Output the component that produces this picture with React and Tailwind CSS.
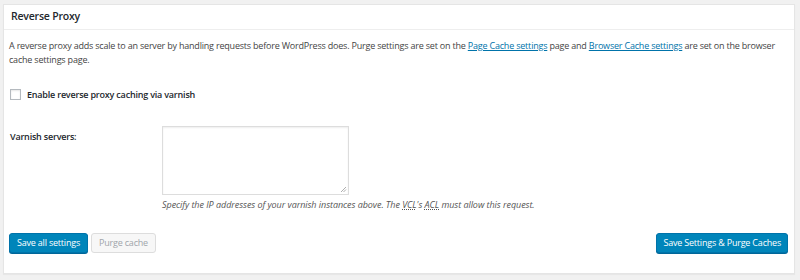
import React from 'react'

const font = { fontFamily: '"Open Sans", "Noto Sans", "Liberation Sans", sans-serif' }

export default function App() {
  return (
    <div className="w-[800px] h-[280px] bg-[#f1f1f1] pt-[4px] pl-[3px] pr-[5px]" style={font}>
      <div className="h-[270px] bg-white border border-[#e5e5e5] shadow-[0_1px_1px_rgba(0,0,0,0.04)] text-[#444] tracking-[-0.2px]">
        {/* Header */}
        <div className="h-[25px] border-b border-[#eee] pl-[7px] flex items-center">
          <h2 className="text-[10.5px] font-semibold text-[#23282d]">Reverse Proxy</h2>
        </div>

        <div className="pl-[5px] pr-[10px]">
          <p className="mt-[9px] text-[9px] leading-[14px] whitespace-nowrap">
            A reverse proxy adds scale to an server by handling requests before WordPress does. Purge settings are set on the{' '}
            <a className="text-[#0073aa] underline">Page Cache settings</a> page and{' '}
            <a className="text-[#0073aa] underline">Browser Cache settings</a> are set on the browser
            <br />
            cache settings page.
          </p>

          {/* Checkbox */}
          <label className="mt-[21px] ml-[1px] flex items-center gap-[6px]">
            <span className="w-[11px] h-[11px] border border-[#b4b9be] bg-white shadow-[inset_0_1px_2px_rgba(0,0,0,0.1)]" />
            <span className="text-[9px] font-semibold text-[#23282d]">Enable reverse proxy caching via varnish</span>
          </label>

          {/* Varnish servers */}
          <div className="mt-[24px] flex">
            <div className="w-[153px] pl-[1px] pt-[4px] text-[9px] font-semibold text-[#23282d]">Varnish servers:</div>
            <div>
              <div className="relative w-[187px] h-[69px] border border-[#ddd] bg-white shadow-[inset_0_1px_2px_rgba(0,0,0,0.07)]">
                <svg className="absolute right-[1px] bottom-[1px]" width="7" height="7" viewBox="0 0 7 7">
                  <path d="M6 1 L1 6 M6 3.5 L3.5 6" stroke="#999" strokeWidth="0.8" />
                </svg>
              </div>
              <p className="mt-[3px] text-[9px] italic text-[#555] tracking-[-0.05px]">
                Specify the IP addresses of your varnish instances above. The{' '}
                <abbr className="underline decoration-dotted">VCL</abbr>'s{' '}
                <abbr className="underline decoration-dotted">ACL</abbr> must allow this request.
              </p>
            </div>
          </div>

          {/* Buttons */}
          <div className="mt-[22px] flex items-center">
            <button className="h-[20px] px-[7px] rounded-[3px] bg-[#0085ba] border border-[#0073aa] text-white text-[9px] shadow-[0_1px_0_#006799]">
              Save all settings
            </button>
            <button className="ml-[3px] h-[20px] px-[7px] rounded-[3px] bg-[#f7f7f7] border border-[#ddd] text-[#a0a5aa] text-[9px]">
              Purge cache
            </button>
            <div className="flex-1" />
            <button className="mr-[-4px] h-[20px] px-[6px] rounded-[3px] bg-[#0085ba] border border-[#0073aa] text-white text-[9px] shadow-[0_1px_0_#006799]">
              Save Settings &amp; Purge Caches
            </button>
          </div>
        </div>
      </div>
    </div>
  )
}
